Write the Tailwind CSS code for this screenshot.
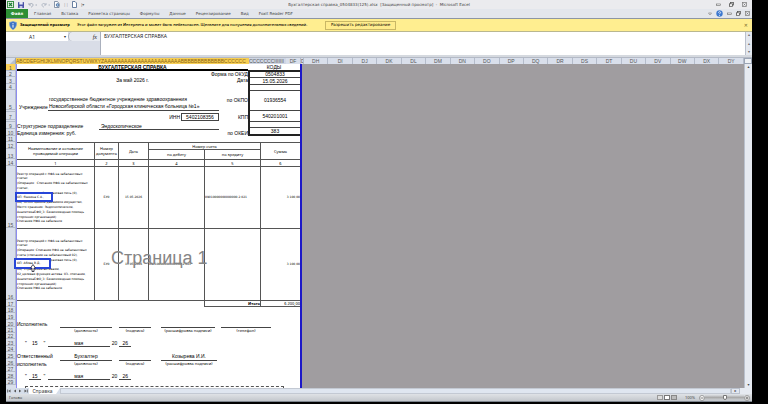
<!DOCTYPE html>
<html lang="ru">
<head>
<meta charset="utf-8">
<title>Бухгалтерская справка</title>
<script src="https://cdn.jsdelivr.net/npm/@tailwindcss/browser@4"></script>
</head>
<body class="bg-black">
<div class="flex h-screen flex-col overflow-hidden bg-black pr-4 pb-0.5 pl-1.5 font-['DejaVu_Sans',sans-serif] text-[4px] leading-[6px] text-[#222]">

  <!-- Title bar -->
  <header class="relative flex h-[9px] shrink-0 items-center justify-between bg-[#ebebee] px-px">
    <div class="flex items-center gap-1">
      <svg class="h-[7px] w-[7px]" viewBox="0 0 7 7"><rect x=".5" y=".5" width="6" height="6" fill="#e6f2e4" stroke="#3b9145"/><path d="M2 2l3 3M5 2L2 5" stroke="#1e7a34" stroke-width="1.2"/></svg>
      <svg class="h-[6px] w-[6px]" viewBox="0 0 6 6"><rect width="6" height="6" rx=".5" fill="#4a53a8"/><rect x="1.3" y="0" width="3.4" height="2.5" fill="#e6e9f6"/><rect x="1.6" y="4" width="2.8" height="2" fill="#c4c9e6"/></svg>
      <svg class="h-[6px] w-[9px]" viewBox="0 0 9 6" fill="none" stroke="#a5adbb"><path d="M1 1v2h2M1 3c1-2 4-2 4 0 0 1-1 2-2 2"/><path d="M7.500 3h1.500"/></svg>
      <svg class="h-[6px] w-[9px]" viewBox="0 0 9 6" fill="none" stroke="#b3bac6"><path d="M5 1v2H3M5 3C4 1 1 1 1 3c0 1 1 2 2 2"/><path d="M7.500 3H9"/></svg>
      <svg class="h-[7px] w-[6px]" viewBox="0 0 6 7"><path d="M.5.500h3l1.500 2v4H.5z" fill="#fff" stroke="#6c7c94" stroke-width=".8"/><circle cx="3.600" cy="4" r="1.400" fill="#9cc0e6" stroke="#3a5a8a" stroke-width=".7"/></svg>
      <span class="text-[#999]">| |</span>
      <svg class="h-[7px] w-[5px]" viewBox="0 0 5 7"><path d="M.5.500h2.500l1.500 1.500v4.500h-4z" fill="#fff" stroke="#44618c" stroke-width=".8"/></svg>
      <span class="text-[#666]">|▾</span>
    </div>
    <h1 class="absolute inset-x-0 text-center text-[#444]">Бухгалтерская справка_0504833(125).xlsx&nbsp; [Защищенный просмотр]&nbsp; -&nbsp; Microsoft Excel</h1>
    <div class="flex items-center gap-2 pr-1">
      <button aria-label="Свернуть"><svg class="h-[5px] w-[5px]" viewBox="0 0 5 5"><rect x=".5" y="2" width="4" height="1.500" fill="#fff" stroke="#666" stroke-width=".6"/></svg></button>
      <button aria-label="Восстановить"><svg class="h-[5px] w-[5px]" viewBox="0 0 5 5" fill="#fff" stroke="#555" stroke-width=".8"><rect x="1.500" y=".5" width="3" height="2.500"/><rect x=".5" y="1.800" width="3" height="2.500"/></svg></button>
      <button aria-label="Закрыть"><svg class="h-[5px] w-[5px]" viewBox="0 0 5 5" fill="none" stroke="#777" stroke-width=".7"><rect x=".5" y=".5" width="4" height="4"/><path d="M1.500 1.500l2 2M3.500 1.500l-2 2"/></svg></button>
    </div>
  </header>

  <!-- Ribbon tabs -->
  <nav class="flex h-[10px] shrink-0 items-stretch justify-between border-b border-[#8d96a3] bg-[#e3e6ec] text-[#444]">
    <div class="flex items-stretch">
      <button class="w-[22px] bg-[#2c8f35] font-bold text-white">Файл</button>
      <div class="flex items-center gap-2.5 pl-1.5">
        <button>Главная</button><button>Вставка</button><button>Разметка страницы</button><button>Формулы</button><button>Данные</button><button>Рецензирование</button><button>Вид</button><button>Foxit Reader PDF</button>
      </div>
    </div>
    <div class="flex items-center gap-1 pr-0.5">
      <button aria-label="Свернуть ленту"><svg class="h-[4px] w-[4px]" viewBox="0 0 4 4"><path d="M.5 1h3L2 3z" fill="#fff" stroke="#777" stroke-width=".6"/></svg></button>
      <button aria-label="Справка"><svg class="h-[7px] w-[7px]" viewBox="0 0 7 7"><circle cx="3.500" cy="3.500" r="3.200" fill="#3c78cf"/><path d="M2.500 2.700c0-1.500 2.200-1.300 2 0-.1.700-1 .7-1 1.500M3.500 5v.8" fill="none" stroke="#fff" stroke-width=".8"/></svg></button>
      <button aria-label="Свернуть окно"><svg class="h-[5px] w-[5px]" viewBox="0 0 5 5"><rect x=".5" y="2" width="4" height="1.500" fill="#fff" stroke="#666" stroke-width=".6"/></svg></button>
      <button aria-label="Восстановить окно"><svg class="h-[5px] w-[5px]" viewBox="0 0 5 5" fill="#fff" stroke="#555" stroke-width=".8"><rect x="1.500" y=".5" width="3" height="2.500"/><rect x=".5" y="1.800" width="3" height="2.500"/></svg></button>
      <button aria-label="Закрыть окно"><svg class="h-[5px] w-[5px]" viewBox="0 0 5 5" fill="none" stroke="#777" stroke-width=".7"><rect x=".5" y=".5" width="4" height="4"/><path d="M1.500 1.500l2 2M3.500 1.500l-2 2"/></svg></button>
    </div>
  </nav>

  <!-- Protected view bar -->
  <div class="flex h-[13px] shrink-0 items-center border-b border-[#b9b78f] bg-[#ffee90] pl-[3px] whitespace-nowrap text-black">
    <svg class="h-[9px] w-[8px]" viewBox="0 0 8 9"><path d="M4 .4L7.600 1.500C7.700 5 6.500 7.600 4 8.700 1.500 7.600.3 5 .4 1.500z" fill="#3c74c4" stroke="#7ea3d8" stroke-width=".6"/><path d="M4 2v.9M4 3.600v3" stroke="#fff"/></svg>
    <b class="ml-[3px] w-[57px] font-['Noto_Sans',sans-serif]">Защищенный просмотр</b>
    <p class="w-[248px] font-['Noto_Sans',sans-serif] font-medium">Этот файл загружен из Интернета и может быть небезопасен. Щелкните для получения дополнительных сведений.</p>
    <button class="h-[9px] w-[71px] border border-[#c9b765] bg-[#ffec8c]">Разрешить редактирование</button>
    <button class="mr-1 ml-auto text-[5px] text-[#7a6c2a]" aria-label="Закрыть">✕</button>
  </div>

  <!-- Formula bar -->
  <div class="flex h-[23px] shrink-0 items-stretch bg-[#d9dde7]">
    <div class="flex h-[9px] w-[62px] items-center bg-white pr-0.5">
      <input aria-label="Имя ячейки" value="A1" class="w-full min-w-0 bg-transparent pr-1.5 text-center font-['Noto_Sans',sans-serif] text-[5px]">
      <span>▾</span>
    </div>
    <div class="flex h-[9px] w-[32px] items-center justify-end rounded-l-full border-l border-[#aab0bd] bg-[#e7eaf0] pr-[3px]"><button class="font-['Liberation_Serif',serif] text-[6px] italic" aria-label="Вставить функцию">fx</button></div>
    <textarea aria-label="Строка формул" class="min-w-0 flex-1 resize-none overflow-hidden border-l border-[#aab0bd] bg-white px-[3px] py-px font-['Noto_Sans',sans-serif] text-[5px] leading-[7px]">БУХГАЛТЕРСКАЯ СПРАВКА</textarea>
    <div class="flex w-[7px] flex-col items-center justify-between border-l border-[#b9c0cc] bg-[#e4e8ef] text-[#666]"><span>▴</span><span>▴</span><span>▾</span></div>
  </div>
  <div class="h-0.5 shrink-0 bg-[#d5d9df]"></div>

  <!-- Column headers -->
  <div class="flex h-[7px] shrink-0 items-stretch border-t border-[#b4bac6] bg-[#d9dfeb] font-['Liberation_Sans',sans-serif] text-[5px] text-[#555]">
    <div class="flex w-[10px] items-end justify-end border-r border-[#9aa3b5]"><svg class="h-[5px] w-[5px]" viewBox="0 0 5 5"><path d="M5 0v5H0z" fill="#b5becd"/></svg></div>
    <div class="w-[233px] overflow-hidden bg-[#f7cf55] whitespace-nowrap text-[#8a6412]">ABCDEFGHIJKLMNOPQRSTUVWXYZAAAAAAAAAAAAAAAAAAAAAAABBBBBBBBBBBBBCCCCCC</div>
    <div class="w-[37px] overflow-hidden bg-[#cfd6e4] whitespace-nowrap">CCCCCCCIIIIIII</div>
    <div class="w-[15px] border-r border-[#b4bccb] text-center">DF</div>
    <div class="w-[3px] overflow-hidden border-r border-[#b4bccb]">D</div>
    <div id="columns" class="flex flex-1"></div>
    <div class="w-[8px] border border-[#9ba5b5] bg-[#eef1f5]"></div>
  </div>

  <!-- Worksheet -->
  <main class="flex min-h-0 flex-1 items-stretch overflow-hidden bg-[#a09da0]">
    <div id="rows" class="flex w-[10px] shrink-0 flex-col bg-[#d9dfeb] font-['Liberation_Sans',sans-serif] text-[5px] leading-[4px] text-[#555]"></div>

    <article class="relative w-[286px] shrink-0 border-r-2 border-l border-r-[#1c18c8] border-l-[#8c8cf0] bg-white font-['Liberation_Sans',sans-serif] text-[5px] text-black">
      <div class="absolute top-[182px] left-[94px] text-[18px] leading-[24px] whitespace-nowrap text-[#858585]">Страница 1</div>

      <!-- Form heading -->
      <section class="flex h-[78px]">
        <div class="w-[231px]">
          <h2 class="h-[7px] border-b-2 border-black text-center leading-[6px] font-bold">БУХГАЛТЕРСКАЯ СПРАВКА</h2>
          <p class="h-[6px] text-right">Форма по ОКУД</p>
          <div class="grid h-[7px] grid-cols-3"><span></span><span class="text-center">За май 2026 г.</span><span class="text-right">Дата</span></div>
          <div class="flex h-[27px] items-end pt-[12px]">
            <span class="w-[31px] pl-0.5 leading-[7px]">Учреждение</span>
            <div class="w-[171px] border-b border-[#444] pl-px leading-[7px] whitespace-nowrap">государственное бюджетное учреждение здравоохранения<br>Новосибирской области «Городская клиническая больница №1»</div>
            <span class="flex-1 self-start pt-px text-right">по ОКПО</span>
          </div>
          <div class="flex h-[12px] items-center">
            <span class="w-[163px] text-right">ИНН</span>
            <span class="ml-px w-[38px] border border-[#444] text-center">5402108356</span>
            <span class="flex-1 text-right">КПП</span>
          </div>
          <div class="flex h-[7px]"><span class="w-[82px]">Структурное подразделение</span><span class="w-[120px] border-b border-[#444] pl-0.5">Эндоскопическое</span></div>
          <div class="flex h-[7px] justify-between"><span>Единица измерения: руб.</span><span>по ОКЕИ</span></div>
        </div>
        <div class="w-[52px] text-center">
          <p class="h-[6px]">КОДЫ</p>
          <div class="flex flex-col divide-y divide-[#444] border-2 border-r-0 border-[#222]">
            <span class="h-[6px] leading-[5px]">0504833</span>
            <span class="h-[7px] leading-[6px]">15.05.2026</span>
            <span class="h-[6px]"></span>
            <span class="h-[20px] leading-[18px]">01936554</span>
            <span class="h-[11px] leading-[11px]">540201001</span>
            <span class="h-[6px]"></span>
            <span class="h-[6px]">383</span>
          </div>
        </div>
      </section>

      <!-- Operations -->
      <table class="w-full table-fixed border-separate border-spacing-0 text-center font-['Noto_Sans',sans-serif] text-[4px] leading-[5px] [&_td]:border-t [&_td]:border-l [&_td]:border-[#555] [&_td]:p-0 [&_th]:border-t [&_th]:border-l [&_th]:border-[#555] [&_th]:p-0 [&_th]:font-normal">
        <colgroup><col class="w-[77px]"><col class="w-[24px]"><col class="w-[30px]"><col class="w-[56px]"><col class="w-[56px]"><col></colgroup>
        <thead>
          <tr class="h-[7px]"><th rowspan="2" class="border-l-0!">Наименование и основание<br>проводимой операции</th><th rowspan="2">Номер<br>документа</th><th rowspan="2">Дата</th><th colspan="2">Номер счета</th><th rowspan="2">Сумма</th></tr>
          <tr class="h-[10px]"><th>по дебету</th><th>по кредиту</th></tr>
          <tr class="h-[7px]"><th class="border-l-0!">1</th><th>2</th><th>3</th><th>4</th><th>5</th><th>6</th></tr>
        </thead>
        <tbody class="font-['DejaVu_Sans',sans-serif] text-[3px]">
          <tr class="h-[62px]">
            <td class="border-l-0! text-left"><div class="flex h-[52px] flex-col justify-between leading-[4px] whitespace-nowrap"><span>Реестр операций с НФА на забалансовых</span><span>счетах</span><span>(Операция: &nbsp;Списание НФА на забалансовых</span><span>счетах,</span><span>Наименование: Одноразовая печь (0),</span><span>&nbsp;</span><span>ОЦ: Особо ценное движимое имущество,</span><span>Место хранения: Эндоскопическое,</span><span>АналитикаБФО_3: Безвозмездная помощь</span><span>сторонних организаций)</span><span>Списание НФА на забалансе</span></div></td>
            <td>БУ0</td><td>15.05.2026</td><td></td><td class="text-left">09010000000000000.2.021</td><td class="text-right">3 100,00</td>
          </tr>
          <tr class="h-[72px]">
            <td class="border-l-0! text-left"><div class="flex h-[52px] flex-col justify-between leading-[4px] whitespace-nowrap"><span>Реестр операций с НФА на забалансовых</span><span>счетах</span><span>(Операция: Списание НФА на забалансовых</span><span>счета (списание на забалансовый 02),</span><span>Наименование: Одноразовая печь (0),</span><span>&nbsp;</span><span>ОЦ: Управление активами,</span><span>02_целевая функция актива: 03- списание,</span><span>АналитикаБФО_3: Безвозмездная помощь</span><span>сторонних организаций)</span><span>Списание НФА на забалансе</span></div></td>
            <td>БУ0</td><td>15.05.2026</td><td class="text-left">09010000000000000.2.021</td><td></td><td class="text-right">3 100,00</td>
          </tr>
        </tbody>
        <tfoot><tr class="h-[7px]"><td colspan="4" class="border-l-0!"></td><td class="border-b pr-px text-right font-bold">Итого</td><td class="border-b text-right">6 200,00</td></tr></tfoot>
      </table>

      <!-- Signatures -->
      <section class="pt-[14px] leading-[7px]">
        <div class="grid grid-cols-[43px_52px_7px_32px_10px_54px_6px_50px] text-center">
          <span class="text-left">Исполнитель</span><span class="border-b border-[#444]"></span><span></span><span class="border-b border-[#444]"></span><span></span><span class="border-b border-[#444]"></span><span></span><span class="border-b border-[#444]"></span>
        </div>
        <div class="grid grid-cols-[43px_52px_7px_32px_10px_54px_6px_50px] text-center font-['Noto_Sans',sans-serif] text-[4px] leading-[6px]">
          <span></span><span>(должность)</span><span></span><span>(подпись)</span><span></span><span>(расшифровка подписи)</span><span></span><span>(телефон)</span>
        </div>
        <div class="mt-[6px] flex h-[7px] gap-0.5 pl-2 text-center"><span>"</span><span class="w-[12px]">15</span><span class="w-[3px]">"</span><span class="w-[62px] border-b border-[#444]">мая</span><span>20</span><span class="w-[12px] border-b border-[#444]">26</span></div>
        <div class="mt-[6px] grid grid-cols-[43px_52px_7px_32px_10px_56px] text-center">
          <span class="text-left">Ответственный</span><span class="border-b border-[#444]">Бухгалтер</span><span></span><span class="border-b border-[#444]"></span><span></span><span class="border-b border-[#444]">Козырева И.И.</span>
        </div>
        <div class="grid grid-cols-[43px_52px_7px_32px_10px_56px] text-center font-['Noto_Sans',sans-serif] text-[4px] leading-[6px]">
          <span class="text-left font-['Liberation_Sans',sans-serif] text-[5px]">исполнитель</span><span>(должность)</span><span></span><span>(подпись)</span><span></span><span>(расшифровка подписи)</span>
        </div>
        <div class="mt-[6px] flex h-[7px] gap-0.5 pl-2 text-center"><span>"</span><span class="w-[12px] border-b border-[#444]">15</span><span class="w-[3px]">"</span><span class="w-[62px] border-b border-[#444]">мая</span><span>20</span><span class="w-[12px] border-b border-[#444]">26</span></div>
        <div class="mt-[6px] mr-4 ml-2 h-[6px] border-t border-r border-l border-dashed border-[#555]"></div>
      </section>

      <!-- Highlighted persons -->
      <div class="absolute top-[128px] -left-0.5 h-[10px] w-[38px] border-2 border-[#2846d8] bg-white font-['DejaVu_Sans',sans-serif] text-[3px] leading-[6px]">ОП: Яшкина С.А.,</div>
      <div class="absolute top-[194px] -left-[3px] h-[11px] w-[37px] border-2 border-[#2846d8] bg-white pl-px font-['DejaVu_Sans',sans-serif] text-[3px] leading-[6px]">ОП: Абова В.Д.,</div>
      <svg class="absolute top-[200px] left-[13px] h-[8px] w-[6px]" viewBox="0 0 6 8"><path d="M3 .5L5.500 4H4v3.500H2V4H.5z" fill="#fff" stroke="#223" stroke-width=".8"/></svg>
    </article>

    <div class="ml-auto flex w-[8px] flex-col items-center justify-between border-l border-[#b9c0cc] bg-[#e6eaf1] text-[#444]"><button aria-label="Вверх" class="h-[6px]">▴</button><button aria-label="Вниз" class="h-[6px]">▾</button></div>
  </main>

  <!-- Sheet tabs -->
  <div class="flex h-[6px] shrink-0 items-stretch bg-[#d6deea] text-[#444]">
    <div class="flex w-[23px] items-center justify-around">
      <svg class="h-[4px] w-[4px]" viewBox="0 0 4 4" fill="#555"><path d="M.3.500h.8v3H.3zM3.500.5v3L1.300 2z"/></svg>
      <svg class="h-[4px] w-[4px]" viewBox="0 0 4 4" fill="#555"><path d="M3 .5v3L.8 2z"/></svg>
      <svg class="h-[4px] w-[4px]" viewBox="0 0 4 4" fill="#555"><path d="M1 .5v3L3.200 2z"/></svg>
      <svg class="h-[4px] w-[4px]" viewBox="0 0 4 4" fill="#555"><path d="M2.900.5h.8v3h-.8zM.5.500v3L2.700 2z"/></svg>
    </div>
    <button class="w-[27px] bg-white font-['Noto_Sans',sans-serif] text-[5px] leading-[6px]">Справка</button>
    <svg class="h-[6px] w-[4px]" viewBox="0 0 4 6"><path d="M0 0h4L0 6z" fill="#fff"/></svg>
    <div class="flex-1 border border-[#c3c9d3] bg-[#dfe6f0]"></div>
    <button class="w-[9px] border border-[#b9c0cc] bg-[#e2e7ef] leading-[4px]" aria-label="Вправо">▸</button>
    <div class="w-[12px] bg-[#e6eaf1]"></div>
  </div>

  <!-- Status bar -->
  <footer class="flex h-[8px] shrink-0 items-center border-b border-[#7e858e] bg-linear-to-b from-[#dfe2e6] to-[#c3c7cc] font-['Noto_Sans',sans-serif] text-[#444]">
    <span class="pl-[3px]">Готово</span>
    <div class="ml-auto flex items-center gap-px pr-2">
      <button aria-label="Обычный" class="h-[5px] w-[6px] border border-[#999] bg-[#ddd]"></button>
      <button aria-label="Разметка" class="h-[5px] w-[6px] border border-[#777] bg-white"></button>
      <button aria-label="Страничный" class="h-[5px] w-[6px] border border-[#888] bg-[#bbb]"></button>
    </div>
    <label for="zoom" class="w-[14px]">100%</label>
    <svg class="h-[6px] w-[6px]" viewBox="0 0 6 6"><circle cx="3" cy="3" r="2.500" fill="#fff" stroke="#777" stroke-width=".7"/><path d="M1.500 3h3" stroke="#555" stroke-width=".8"/></svg>
    <input id="zoom" type="range" value="50" class="h-[5px] w-[39px] appearance-none bg-linear-to-b from-transparent via-[#aaa] to-transparent [&::-webkit-slider-thumb]:h-[5px] [&::-webkit-slider-thumb]:w-[4px] [&::-webkit-slider-thumb]:appearance-none [&::-webkit-slider-thumb]:rounded-b-full [&::-webkit-slider-thumb]:border [&::-webkit-slider-thumb]:border-[#777] [&::-webkit-slider-thumb]:bg-white">
    <svg class="mr-0.5 h-[6px] w-[6px]" viewBox="0 0 6 6"><circle cx="3" cy="3" r="2.500" fill="#fff" stroke="#777" stroke-width=".7"/><path d="M1.500 3h3M3 1.500v3" stroke="#555" stroke-width=".8"/></svg>
  </footer>
</div>
<script>
  document.getElementById('columns').innerHTML = 'HIJKLMNOPQRSTUVWXY'.split('')
    .map(c => `<div class="flex-1 border-r border-[#b4bccb] text-center">D${c}</div>`).join('');
  const heights = [7,6,7,6,20,2,8,2,7,7,6,7,10,7,62,72,7,6,7,7,6,6,7,6,7,7,6,7,6];
  document.getElementById('rows').innerHTML = heights
    .map((h, i) => `<div style="height:${h}px" class="flex shrink-0 items-end justify-center overflow-hidden border-r border-b border-[#b4bccb] ${i === 0 ? 'bg-[#fbd25a]' : ''}">${h < 3 ? '' : i + 1}</div>`).join('');
</script>
</body>
</html>
